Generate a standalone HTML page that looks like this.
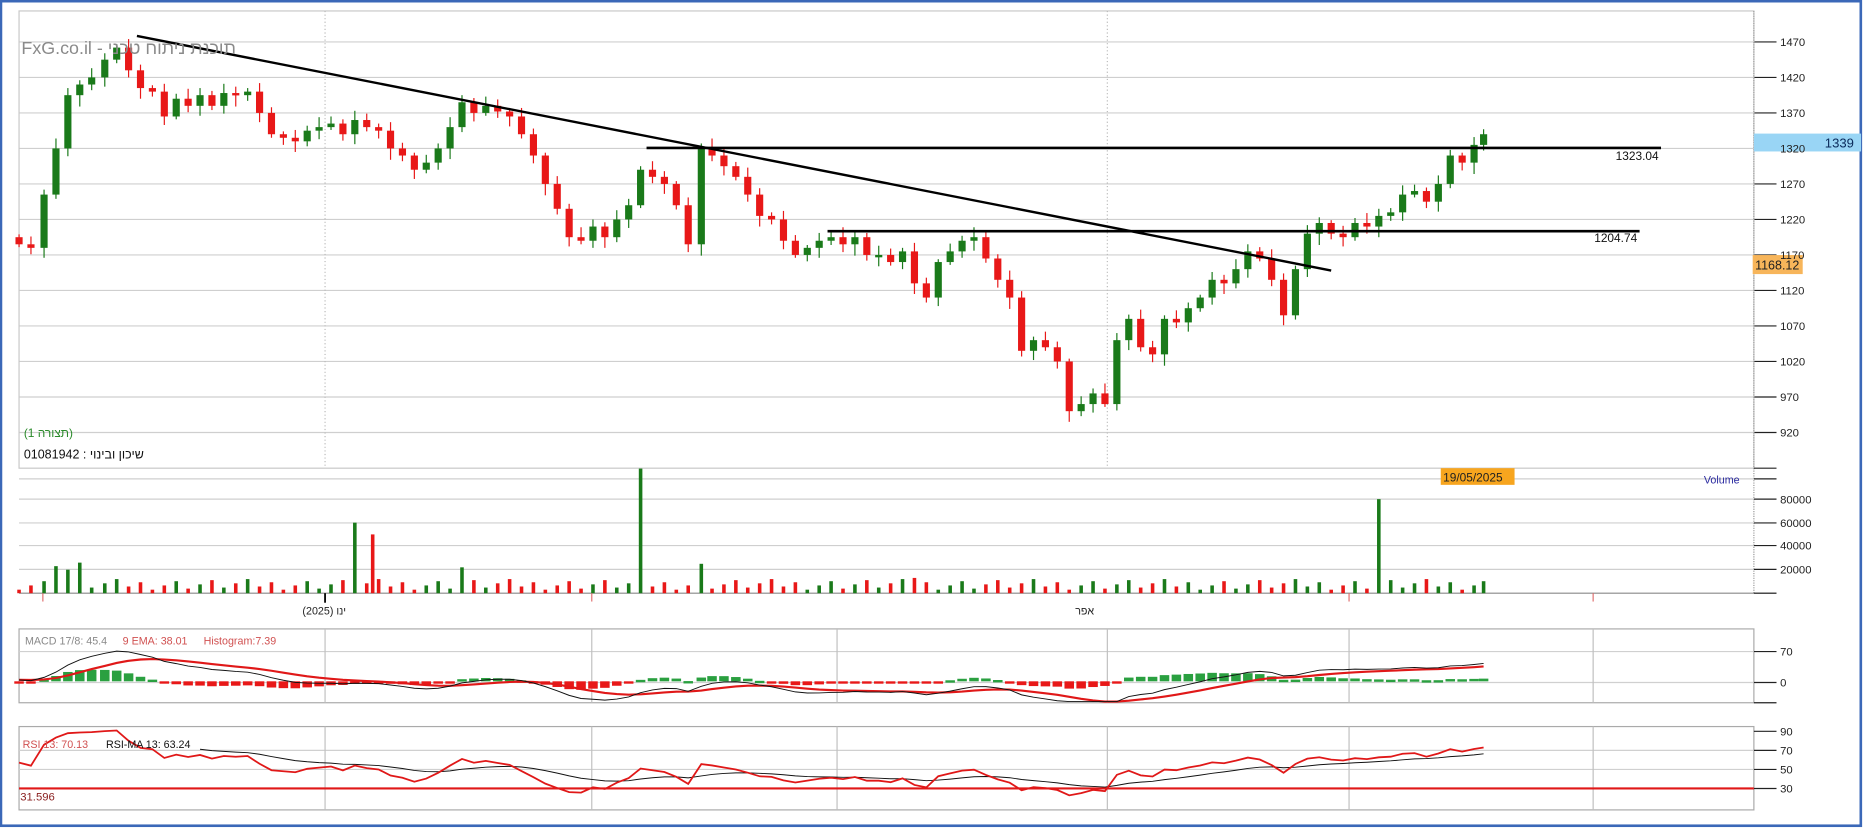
<!DOCTYPE html>
<html><head><meta charset="utf-8">
<style>
html,body{margin:0;padding:0;background:#fff;width:1867px;height:828px;overflow:hidden}
svg{display:block}
text{font-family:"Liberation Sans","Noto Sans CJK SC",sans-serif}
</style></head><body>
<svg id="s" width="1867" height="828" viewBox="0 0 1568 695" xmlns="http://www.w3.org/2000/svg">
<rect x="0.8" y="0.8" width="1562" height="692.5" fill="#fff" stroke="#3b68b8" stroke-width="2.2"/>
<g id="grid"></g>
<g id="draw"></g>
<text x="18" y="45" font-size="15" fill="#8a8a8a">FxG.co.il - תוכנת ניתוח טכני</text>
<text x="20" y="367" font-size="10" fill="#2a8a2a">(תצורה 1)</text>
<text x="20" y="385" font-size="10.5" fill="#111">שיכון ובינוי : 01081942</text>
<text x="1393" y="134" font-size="10" fill="#111" text-anchor="end">1323.04</text>
<text x="1375" y="203" font-size="10" fill="#111" text-anchor="end">1204.74</text>
<rect x="1473" y="112" width="90" height="15" fill="#99d5f5"/>
<text x="1557" y="123.5" font-size="11" fill="#0a2a5a" text-anchor="end">1339</text>
<rect x="1472" y="214" width="42" height="16" fill="#f7b55a"/>
<text x="1474" y="226" font-size="10.5" fill="#222">1168.12</text>
<rect x="1210" y="393" width="62" height="14" fill="#f7a51e"/>
<text x="1212" y="404" font-size="10" fill="#222">19/05/2025</text>
<text x="1431" y="406" font-size="9" fill="#2a2aa0">Volume</text>
<text x="254" y="516" font-size="9" fill="#222">ינו (2025)</text>
<text x="903" y="516" font-size="9" fill="#222">אפר</text>
<text x="21" y="541" font-size="9" fill="#888">MACD 17/8: 45.4</text>
<text x="103" y="541" font-size="9" fill="#d05050">9 EMA: 38.01</text>
<text x="171" y="541" font-size="9" fill="#d05050">Histogram:7.39</text>
<text x="19" y="628" font-size="9" fill="#d05050">RSI 13: 70.13</text>
<text x="89" y="628" font-size="9" fill="#111">RSI-MA 13: 63.24</text>
<text x="17" y="672" font-size="9.5" fill="#8a2020">31.596</text>
</svg>
<script>
var NS="http://www.w3.org/2000/svg";
function el(g,t,a){var e=document.createElementNS(NS,t);for(var k in a)e.setAttribute(k,a[k]);g.appendChild(e);return e;}
var G=document.getElementById('grid'),D=document.getElementById('draw'),S=document.getElementById('s');
var L=16,R=1473;
function py(p){return 35+(1470-p)*0.5964;}
for(var p=1470;p>=920;p-=50){var y=py(p);el(G,'line',{x1:L,x2:R,y1:y,y2:y,stroke:'#cfcfcf','stroke-width':1});
el(G,'line',{x1:R,x2:R+19,y1:y,y2:y,stroke:'#222','stroke-width':1});
var t=el(S,'text',{x:R+22,y:y+3.5,'font-size':'9.5',fill:'#222'});t.textContent=p;}
el(G,'rect',{x:L,y:9,width:R-L,height:384,fill:'none',stroke:'#c8c8c8'});
el(G,'line',{x1:R,x2:R,y1:9,y2:498,stroke:'#999','stroke-dasharray':'1,1'});
[273,930].forEach(function(x){el(G,'line',{x1:x,x2:x,y1:9,y2:393,stroke:'#bbb','stroke-dasharray':'1,2'});});
[402,419,439,458,478].forEach(function(y){el(G,'line',{x1:L,x2:R,y1:y,y2:y,stroke:'#cfcfcf'});});
el(G,'line',{x1:L,x2:R+19,y1:498,y2:498,stroke:'#888'});
[393,402,419,439,458,478,498].forEach(function(y){el(G,'line',{x1:R,x2:R+19,y1:y,y2:y,stroke:'#222'});});
[["80000",419],["60000",439],["40000",458],["20000",478]].forEach(function(a){var t=el(S,'text',{x:R+22,y:a[1]+3.5,'font-size':'9.5',fill:'#222'});t.textContent=a[0];});
[36,497,1133,1338].forEach(function(x){el(G,'line',{x1:x,x2:x,y1:498,y2:505,stroke:'#e07070'});});
el(G,'line',{x1:273,x2:273,y1:498,y2:506,stroke:'#000','stroke-width':1.5});
el(G,'rect',{x:L,y:528,width:R-L,height:62,fill:'none',stroke:'#aaa'});
[547,573].forEach(function(y){el(G,'line',{x1:L,x2:R,y1:y,y2:y,stroke:'#d0d0d0'});});
[[547,'70'],[573,'0'],[590,'']].forEach(function(a){el(G,'line',{x1:R,x2:R+19,y1:a[0],y2:a[0],stroke:'#222'});if(a[1]){var t=el(S,'text',{x:R+22,y:a[0]+3.5,'font-size':'9.5',fill:'#222'});t.textContent=a[1];}});
el(G,'rect',{x:L,y:610,width:R-L,height:70,fill:'none',stroke:'#aaa'});
[630,646].forEach(function(y){el(G,'line',{x1:L,x2:R,y1:y,y2:y,stroke:'#d0d0d0'});});
[[614,'90'],[630,'70'],[646,'50'],[662,'30']].forEach(function(a){el(G,'line',{x1:R,x2:R+19,y1:a[0],y2:a[0],stroke:'#222'});var t=el(S,'text',{x:R+22,y:a[0]+3.5,'font-size':'9.5',fill:'#222'});t.textContent=a[1];});
[273,497,703,930,1133,1338].forEach(function(x){el(G,'line',{x1:x,x2:x,y1:528,y2:590,stroke:'#c0c0c0'});el(G,'line',{x1:x,x2:x,y1:610,y2:680,stroke:'#c0c0c0'});});
var K=[[16,1185],[26,1180],[37,1255],[47,1320],[57,1395],[67,1410],[77,1420],[88,1445],[98,1462],[108,1430],[118,1405],[128,1400],[138,1365],[148,1390],[158,1380],[168,1395],[178,1380],[188,1398],[198,1395],[208,1400],[218,1370],[228,1340],[238,1335],[248,1330],[258,1345],[268,1350],[278,1355],[288,1340],[298,1360],[308,1350],[318,1345],[328,1320],[338,1310],[348,1290],[358,1300],[368,1320],[378,1350],[388,1385],[398,1370],[408,1380],[418,1372],[428,1365],[438,1340],[448,1310],[458,1270],[468,1235],[478,1195],[488,1190],[498,1210],[508,1195],[518,1220],[528,1240],[538,1290],[548,1280],[558,1270],[568,1240],[578,1185],[589,1320],[598,1310],[608,1295],[618,1280],[628,1255],[638,1225],[648,1220],[658,1190],[668,1170],[678,1180],[688,1190],[698,1195],[708,1185],[718,1195],[728,1170],[738,1170],[748,1160],[758,1175],[768,1130],[778,1110],[788,1160],[798,1175],[808,1190],[818,1195],[828,1165],[838,1135],[848,1110],[858,1035],[868,1050],[878,1040],[888,1020],[898,950],[908,960],[918,975],[928,960],[938,1050],[948,1080],[958,1040],[968,1030],[978,1080],[988,1075],[998,1095],[1008,1110],[1018,1135],[1028,1130],[1038,1150],[1048,1175],[1058,1165],[1068,1135],[1078,1085],[1088,1150],[1098,1200],[1108,1215],[1118,1200],[1128,1195],[1138,1215],[1148,1210],[1158,1225],[1168,1230],[1178,1255],[1188,1260],[1198,1245],[1208,1270],[1218,1310],[1228,1300],[1238,1325],[1246,1340]];
var GR='#1a7a1a',RD='#e81818';
var closes=[];
var vs=[[302,60000],[539,106000],[589,25000],[1158,80000],[47,23000],[57,20000],[67,26000],[388,22000],[768,13000]];
var vol={};
vs.forEach(function(a){var bi=0,bd=1e9;for(var i=0;i<K.length;i++){var d=Math.abs(K[i][0]-a[0]);if(d<bd){bd=d;bi=i;}}vol[bi]=a[1];});
for(var i=0;i<K.length;i++){
 var x=K[i][0],c=K[i][1],o=i?K[i-1][1]:1195;
 closes.push(c);
 if(Math.abs(c-o)<3)o=c-3;
 var up=c>o,col=up?GR:RD;
 var hi=Math.max(o,c)+4+((i*7)%11),lo=Math.min(o,c)-4-((i*5)%13);
 el(D,'line',{x1:x,x2:x,y1:py(hi),y2:py(lo),stroke:col,'stroke-width':1});
 var yt=py(Math.max(o,c)),yb=py(Math.min(o,c));
 el(D,'rect',{x:x-3,y:yt,width:6,height:Math.max(2,yb-yt),fill:col});
 var v=vol[i]||(3000+((i*37)%11)*900);
 var vh=Math.min(105,v*79/80000);
 el(D,'rect',{x:x-1.5,y:498-vh,width:3,height:vh,fill:col});
}
el(D,'rect',{x:311.5,y:498-50000*79/80000,width:3,height:50000*79/80000,fill:RD});
el(D,'line',{x1:115,y1:30,x2:1118,y2:227,stroke:'#000','stroke-width':2});
el(D,'line',{x1:543,y1:124,x2:1395,y2:124,stroke:'#000','stroke-width':2.2});
el(D,'line',{x1:695,y1:194,x2:1377,y2:194,stroke:'#000','stroke-width':2.2});
function ema(a,n){var k=2/(n+1),r=[],e=a[0];for(var i=0;i<a.length;i++){e=i?a[i]*k+e*(1-k):a[i];r.push(e);}return r;}
var pre=[];for(var j=0;j<25;j++)pre.push(1150+j*1.5+((j*13)%5)*3);
var all=pre.concat(closes);
var e8=ema(all,8),e17=ema(all,17),m=[];for(var j=0;j<all.length;j++)m.push(e8[j]-e17[j]);
var sg=ema(m,9);m=m.slice(25);sg=sg.slice(25);
function my(v){return Math.max(529,Math.min(589,573-v*0.371));}
var pm='',ps='';
for(var i=0;i<K.length;i++){var x=K[i][0];pm+=(i?'L':'M')+x+','+my(m[i]);ps+=(i?'L':'M')+x+','+my(sg[i]);
 var h=(m[i]-sg[i])*0.9,y0=573,y1=573-h*0.371;
 el(D,'rect',{x:x-4,y:Math.min(y0,y1)-1,width:8,height:Math.max(2,Math.abs(y1-y0)),fill:h>=0?'#2aa040':'#e81818'});}
el(D,'path',{d:ps,fill:'none',stroke:'#e01818','stroke-width':1.8});
el(D,'path',{d:pm,fill:'none',stroke:'#111','stroke-width':0.8});
var n=13,ag=0,al=0,rsi=[];
for(var j=1;j<all.length;j++){var d=all[j]-all[j-1],g=d>0?d:0,l=d<0?-d:0;
 if(j<=n){ag+=g/n;al+=l/n;}else{ag=(ag*(n-1)+g)/n;al=(al*(n-1)+l)/n;}
 rsi.push(al==0?100:100-100/(1+ag/al));}
var rma=ema(rsi,13);rsi=rsi.slice(24);rma=rma.slice(24);
function ry(v){return Math.max(611,Math.min(679,662-(v-30)*0.8));}
var pr='',pa='';
for(var i=0;i<K.length;i++){var x=K[i][0];pr+=(i?'L':'M')+x+','+ry(rsi[i]);if(i>=15)pa+=(i>15?'L':'M')+x+','+ry(rma[i]);}
el(D,'path',{d:pa,fill:'none',stroke:'#111','stroke-width':0.8});
el(D,'path',{d:pr,fill:'none',stroke:'#e01818','stroke-width':1.5});
el(D,'line',{x1:L,x2:R,y1:662,y2:662,stroke:'#e01818','stroke-width':1.8});
</script>
</body></html>
